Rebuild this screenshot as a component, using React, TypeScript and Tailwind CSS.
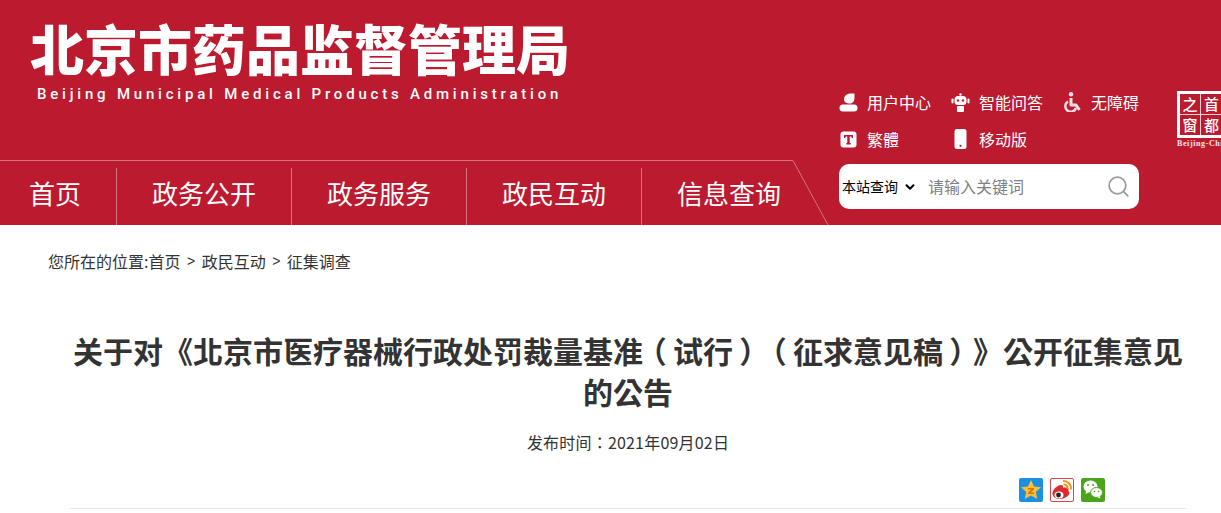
import React from "react";
import { Search, ChevronDown } from "lucide-react";

const CJK = "font-['Noto_Sans_CJK_SC','Liberation_Sans',sans-serif]";
const CJK_TC = "font-['Noto_Sans_CJK_TC','Noto_Sans_CJK_SC',sans-serif]";
const NAV_ITEMS = ["政务公开", "政务服务", "政民互动", "信息查询"];

const UserIcon = () => (
  <svg width="19" height="19" viewBox="0 0 19 19" fill="#fff">
    <path d="M5 6.500C5 3 7.500.5 12 .5h3.500V5c0 3.500-2 5.500-5 5.500S5 9 5 6.500z" />
    <rect x="0.500" y="11.500" width="18" height="7" rx="3.500" />
  </svg>
);

const RobotIcon = () => (
  <svg width="19" height="19" viewBox="0 0 19 19" fill="#fff">
    <circle cx="9.500" cy="1.500" r="1.200" />
    <rect x="3.500" y="3" width="12" height="9" rx="3.500" />
    <rect x="0.500" y="5.500" width="2" height="5" rx="1" />
    <rect x="16.500" y="5.500" width="2" height="5" rx="1" />
    <rect x="6" y="13" width="7" height="6" rx="1" />
    <circle cx="7" cy="7.500" r="1.200" fill="#bc1a2f" />
    <circle cx="12" cy="7.500" r="1.200" fill="#bc1a2f" />
  </svg>
);

const WheelchairIcon = () => (
  <svg width="18" height="20" viewBox="0 0 18 20" fill="none" stroke="#f6dfe2">
    <circle cx="7" cy="2.200" r="2.200" fill="#f6dfe2" stroke="none" />
    <path d="M7 6v7h5l3.500 5" strokeWidth="3" strokeLinejoin="round" />
    <path d="M4 9.500a5.500 5.500 0 1 0 8 6.500" strokeWidth="2.500" />
  </svg>
);

const FontIcon = () => (
  <svg width="17" height="17" viewBox="0 0 17 17">
    <rect x="0.500" y="0.500" width="16" height="16" rx="3" fill="#fff" />
    <path d="M4 4h9v3h-1.200l-.6-1.400H9.700v6.200l1 .5V13.500H6.300v-1.200l1-.5V5.600H5.800L5.200 7H4z" fill="#bc1a2f" />
  </svg>
);

const PhoneIcon = () => (
  <svg width="13" height="20" viewBox="0 0 13 20">
    <rect x="0.500" y="0" width="12" height="20" rx="2.500" fill="#fff" />
    <circle cx="6.500" cy="16.800" r="1.100" fill="#bc1a2f" />
  </svg>
);

const QzoneIcon = () => (
  <svg width="24" height="24" viewBox="0 0 24 24">
    <rect width="24" height="24" rx="2" fill="#1a8fe3" />
    <path d="M12 2l3 6.500 7 .8-5.200 4.700 1.500 7L12 17.500 5.700 21l1.500-7L2 9.300l7-.8z" fill="#fbc02d" />
    <path d="M9 10h6v1.500l-3.500 3H15V16H9v-1.500l3.500-3H9z" fill="#d9731a" />
  </svg>
);

const WeiboIcon = () => (
  <svg width="24" height="24" viewBox="0 0 24 24">
    <rect x="0.500" y="0.500" width="23" height="23" rx="1.500" fill="#fff" stroke="#d9454a" />
    <path d="M2.500 15.500c0-4 5-8.500 8.500-8.500 2 0 2.500 1.500 2 3 3-1 5.500-.5 5.500 1.500 0 1-.5 1.500 1 3 0 3.500-5 6.500-9.500 6.500s-7.500-2-7.500-5.500z" fill="#e0282e" />
    <ellipse cx="9" cy="17" rx="4.500" ry="3.500" fill="#fff" />
    <circle cx="8.500" cy="17" r="2.400" fill="#222" />
    <path d="M13 3c4.500-.5 8.500 3.500 8 8.500M13.500 6.500c2.500-.5 4.500 1.500 4.200 4.500" fill="none" stroke="#f39a1e" strokeWidth="2" />
  </svg>
);

const WechatIcon = () => (
  <svg width="24" height="24" viewBox="0 0 24 24">
    <rect width="24" height="24" rx="2" fill="#4aa51c" />
    <ellipse cx="9.500" cy="8.500" rx="7" ry="6" fill="#fff" />
    <path d="M5 12.500l-.5 3.500L8.500 14z" fill="#fff" />
    <ellipse cx="15.500" cy="14.500" rx="6" ry="5" fill="#fff" stroke="#4aa51c" strokeWidth="1" />
    <path d="M18.500 18l1 2.500-3.500-1.500z" fill="#fff" />
    <circle cx="7" cy="7" r="1" fill="#4aa51c" />
    <circle cx="12" cy="7" r="1" fill="#4aa51c" />
    <circle cx="13.500" cy="13.500" r=".8" fill="#4aa51c" />
    <circle cx="17.500" cy="13.500" r=".8" fill="#4aa51c" />
  </svg>
);

const ToolLink = ({ icon, label, width }: { icon: React.ReactNode; label: string; width: string }) => (
  <div className={`flex items-center ${width}`}>
    <span className="flex w-[19px] justify-center">{icon}</span>
    <span className="ml-[9px] text-[16px] text-white">{label}</span>
  </div>
);

// 括号在整个字宽内居中
const Paren = ({ children }: { children: string }) => (
  <span className="inline-block w-[30px] text-center [font-feature-settings:'palt']">{children}</span>
);

const CapitalLogo = () => (
  <div className="ml-[38px] flex w-[44px] shrink-0 flex-col overflow-hidden pt-[91px]">
    <div className="grid h-[47px] w-[48px] shrink-0 grid-cols-2 border-[3px] border-white text-[15px] font-medium leading-[20px] text-white">
      <span className="border-b border-r border-white/80 text-center">之</span>
      <span className="border-b border-white/80 text-center">首</span>
      <span className="border-r border-white/80 text-center">窗</span>
      <span className="text-center">都</span>
    </div>
    <span className="mt-[1px] whitespace-nowrap font-['Liberation_Serif',serif] text-[8px] font-bold leading-[10px] tracking-[0.6px] text-white/90">
      Beijing-China
    </span>
  </div>
);

export default function App() {
  return (
    <div className={`min-h-[513px] w-full overflow-hidden bg-white ${CJK}`}>
      <header className="relative h-[225px] bg-[#bc1a2f]">
        <div className="flex h-[160px]">
          <div className="w-[839px] shrink-0 pl-[30px] pt-[10px]">
            <h1 className="text-[54px] font-black leading-[75px] text-white">北京市药品监督管理局</h1>
            <p className="pl-[7px] font-['Roboto',sans-serif] text-[15px] font-medium leading-[18px] tracking-[3.8px] text-white">
              Beijing Municipal Medical Products Administration
            </p>
          </div>
          <div className="flex flex-col pt-[87px]">
            <div className="flex h-[30px]">
              <ToolLink icon={<UserIcon />} label="用户中心" width="w-[112px]" />
              <ToolLink icon={<RobotIcon />} label="智能问答" width="w-[112px]" />
              <ToolLink icon={<WheelchairIcon />} label="无障碍" width="w-[76px]" />
            </div>
            <div className="mt-[7px] flex h-[30px]">
              <ToolLink icon={<FontIcon />} label="繁體" width="w-[112px]" />
              <ToolLink icon={<PhoneIcon />} label="移动版" width="w-[112px]" />
            </div>
          </div>
          <CapitalLogo />
        </div>
        <div className="flex h-[65px]">
          <nav className="h-[65px] w-[793px] shrink-0 border-t border-[#d2737f] pt-[7px]">
            <ul className="flex h-[57px]">
              <li className="flex w-[116px] shrink-0 items-center justify-center pb-[9px] pr-[6px] text-[26px] text-white">首页</li>
              {NAV_ITEMS.map((item) => (
                <li
                  key={item}
                  className="flex w-[175px] shrink-0 items-center justify-center border-l border-[#d2737f] pb-[9px] text-[26px] text-white"
                >
                  {item}
                </li>
              ))}
            </ul>
          </nav>
          <svg className="h-[65px] w-[36px] shrink-0" viewBox="0 0 36 65">
            <path d="M0 .5L35 65" stroke="#d2737f" fill="none" />
          </svg>
          <div className="ml-[10px] mt-[4px] flex h-[45px] w-[300px] items-center rounded-[10px] bg-white">
            <span className="ml-[3px] pb-[1px] text-[14px] text-black">本站查询</span>
            <ChevronDown size={14} strokeWidth={3.500} className="ml-[5px] text-black" />
            <span className="ml-[11px] flex-1 pb-[2px] text-[16px] text-[#808080]">请输入关键词</span>
            <Search size={25} strokeWidth={1.600} className="mr-[8px] text-[#9a9a9a]" />
          </div>
        </div>
      </header>
      <main className="pl-[48px]">
        <div className="flex items-center pt-[25px] text-[16px] leading-[22px] text-[#333]">
          您所在的位置:首页
          <span className="mx-[6.500px] font-['Liberation_Sans',sans-serif] text-[14px]">&gt;</span>
          政民互动
          <span className="mx-[6.500px] font-['Liberation_Sans',sans-serif] text-[14px]">&gt;</span>
          征集调查
        </div>
        <div className="ml-[22px] w-[1116px]">
          <h2 className={`mt-[58px] text-center text-[30px] font-bold leading-[41px] text-[#333] [text-spacing-trim:space-all] ${CJK_TC}`}>
            关于对《北京市医疗器械行政处罚裁量基准<Paren>（</Paren>试行<Paren>）</Paren><Paren>（</Paren>征求意见稿<Paren>）</Paren>》公开征集意见的公告
          </h2>
          <p className={`mt-[19px] text-center text-[16px] leading-[22px] tracking-[0.2px] text-[#333] ${CJK_TC}`}>发布时间：2021年09月02日</p>
          <div className="mt-[25px] flex justify-end gap-[7px] pr-[81px]">
            <QzoneIcon />
            <WeiboIcon />
            <WechatIcon />
          </div>
          <div className="mt-[6px] border-t border-[#e8e8e8]" />
        </div>
      </main>
    </div>
  );
}
